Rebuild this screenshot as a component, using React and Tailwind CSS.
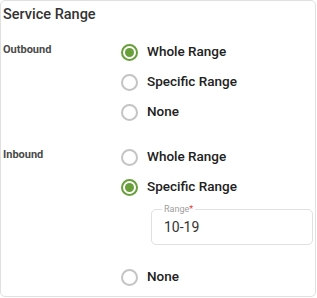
import React from 'react';

const font = { fontFamily: 'Roboto, "Liberation Sans", sans-serif' };

function Radio({ checked, label }) {
  return (
    <div className="h-[30px] flex items-center">
      <span
        className={`w-[17px] h-[17px] rounded-full border-2 flex items-center justify-center shrink-0 ${
          checked ? 'border-[#689f38]' : 'border-[#c4c4c4]'
        }`}
      >
        {checked && <span className="w-[9px] h-[9px] rounded-full bg-[#689f38]" />}
      </span>
      <span className="ml-[9px] text-[13.5px] font-medium text-[#212121] leading-none">{label}</span>
    </div>
  );
}

function Section({ title, children }) {
  return (
    <div className="flex">
      <div className="w-[121px] pl-[3px] pt-[5px] text-[11px] font-bold text-[#4a4a4a] leading-[16px]">{title}</div>
      <div className="flex-1 flex flex-col">{children}</div>
    </div>
  );
}

export default function App() {
  return (
    <div className="w-[317px] h-[298px] bg-white" style={font}>
      <div className="w-[316px] h-[297px] border border-[#e0e0e0] rounded-[5px] flex flex-col">
        <h2 className="pl-[2px] pt-[4px] text-[14.5px] font-medium text-[#333333] leading-[20px]">Service Range</h2>

        <div className="mt-[12px] -ml-px">
          <Section title="Outbound">
            <Radio checked label="Whole Range" />
            <Radio label="Specific Range" />
            <Radio label="None" />
          </Section>
        </div>

        <div className="mt-[15px] -ml-px">
          <Section title="Inbound">
            <Radio label="Whole Range" />
            <Radio checked label="Specific Range" />
            <div className="ml-[30px] mt-[7px] w-[162px] h-[36px] relative border border-[#e0e0e0] rounded-[5px] flex items-center pl-[12px]">
              <span className="absolute -top-[6px] left-[10px] bg-white px-[2px] text-[9px] leading-[10px] text-[#9e9e9e]">
                Range<span className="text-[#e53935]">*</span>
              </span>
              <span className="text-[14px] text-[#333333] leading-none">10-19</span>
            </div>
            <div className="mt-[17px]">
              <Radio label="None" />
            </div>
          </Section>
        </div>
      </div>
    </div>
  );
}
